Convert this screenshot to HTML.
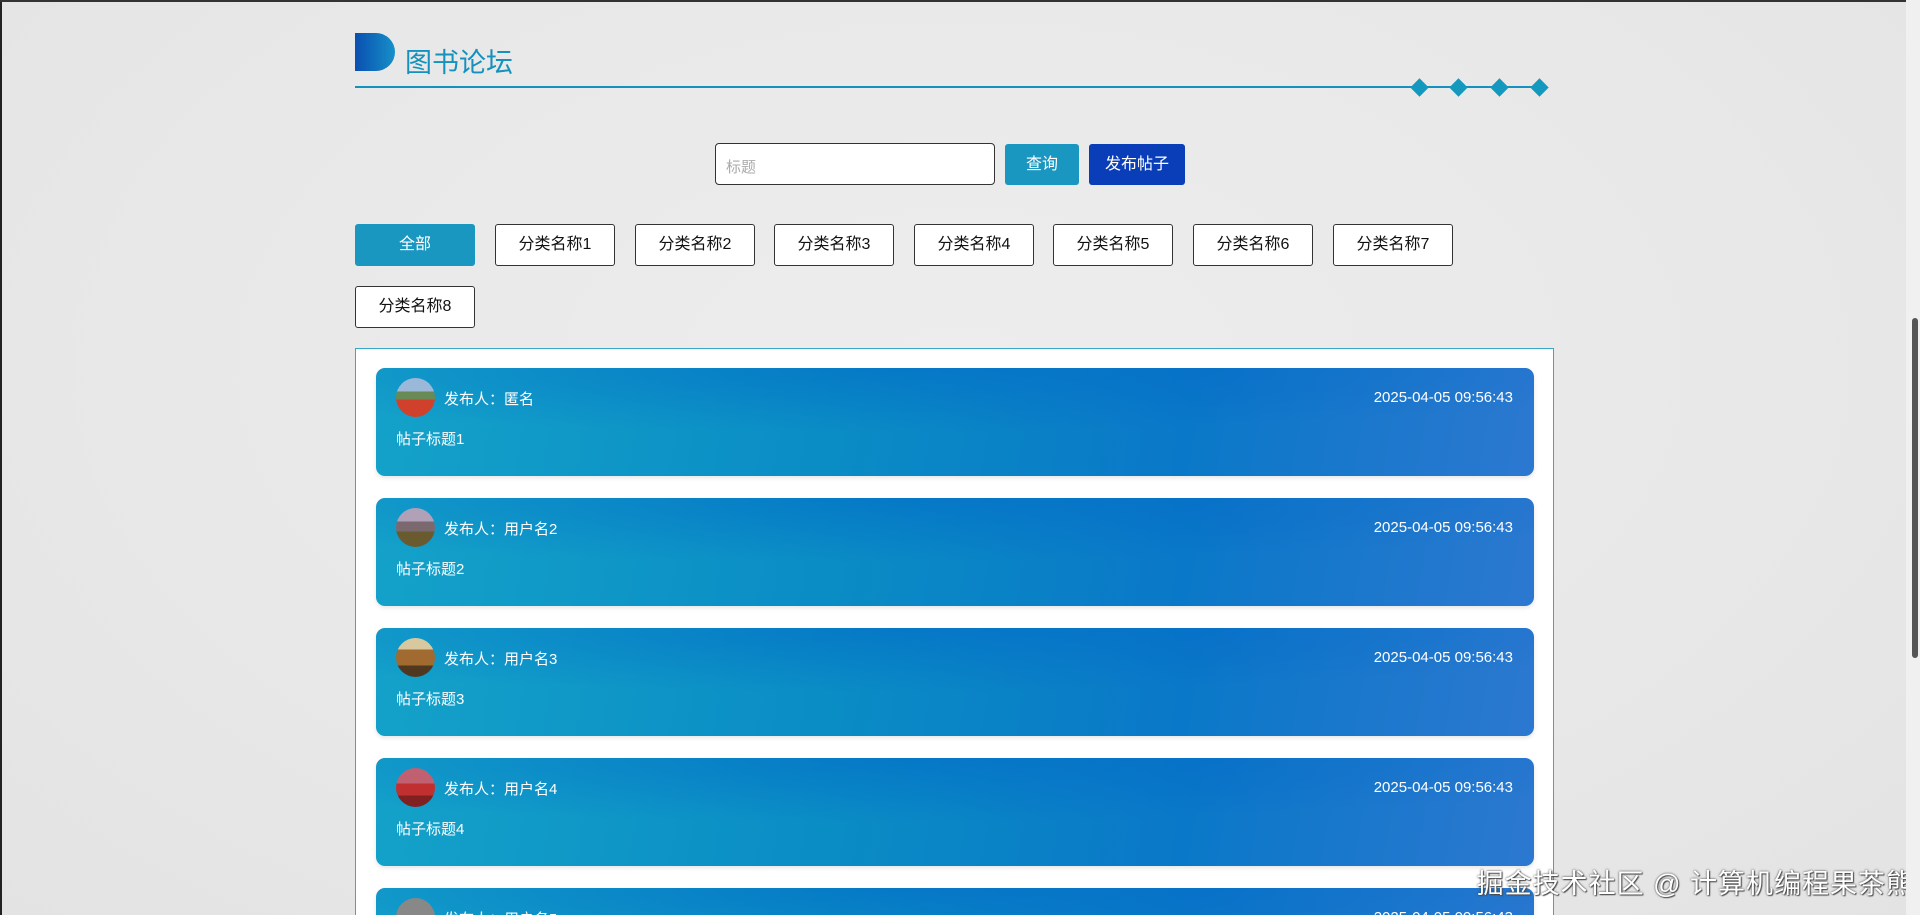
<!DOCTYPE html>
<html><head><meta charset="utf-8"><style>
*{box-sizing:border-box;margin:0;padding:0}
html,body{width:1920px;height:915px;overflow:hidden}
body{font-family:"Liberation Sans","Noto Sans CJK SC",sans-serif;position:relative}
#w{position:absolute;left:0;top:0;width:1920px;height:915px;overflow:hidden;background:radial-gradient(ellipse at 50% 40%,#ededed 0%,#e8e8e8 60%,#e3e3e3 100%)}
.abs{position:absolute}
.logo{left:355px;top:33px;width:40px;height:38px;background:linear-gradient(90deg,#0a4fb0,#1690c8);border-radius:0 20px 20px 0}
.title{left:405px;top:46px;font-size:27px;color:#1591bd;line-height:34px}
.line{left:355px;top:86px;width:1190px;height:2px;background:#1591bd}
.dia{width:13px;height:13px;background:#1598bd;transform:rotate(45deg);top:81px}
.inp{left:715px;top:143px;width:280px;height:42px;background:#fff;border:1.5px solid #333;border-radius:4px;font-size:15px;color:#aaa;padding:12px 10px}
.btn{height:41px;top:144px;color:#fff;font-size:16px;text-align:center;line-height:41px;border-radius:3px}
.cat{width:120px;height:42px;border:1.5px solid #333;background:#fff;border-radius:3px;font-size:16px;text-align:center;line-height:39px;color:#111}
.box{left:355px;top:348px;width:1199px;height:600px;background:#fff;border:1px solid #3aa7c7}
.card{left:376px;width:1158px;height:108px;border-radius:9px;background:radial-gradient(ellipse 70% 60% at 45% 0%,rgba(0,100,200,.45),rgba(0,100,200,0) 100%),linear-gradient(100deg,#14a2c9 0%,#0a8cc5 40%,#0a78c8 70%,#2c78d0 100%);color:#fff;box-shadow:0 2px 4px rgba(0,0,0,.1)}
.av{position:absolute;left:20px;top:10px;width:39px;height:39px;border-radius:50%}
.who{position:absolute;left:68px;top:20px;font-size:15px}
.dt{position:absolute;right:21px;top:21px;font-size:15px}
.tt{position:absolute;left:20px;top:60px;font-size:15px}
.wm{right:6px;top:862px;font-size:27px;color:#fff;text-shadow:0 0 2px #333,1px 1px 1px #555;letter-spacing:1px;white-space:nowrap}
.sb{right:0;top:0;width:14px;height:915px;background:#f0f0f0}
.sb i{position:absolute;right:2px;top:318px;width:6px;height:340px;background:#555;border-radius:3px}
</style></head><body><div id="w">
<div class="abs" style="left:0;top:0;width:2px;height:915px;background:#222"></div>
<div class="abs" style="left:0;top:0;width:1920px;height:2px;background:#333"></div>
<div class="abs logo"></div>
<div class="abs title">图书论坛</div>
<div class="abs line"></div>
<div class="abs dia" style="left:1413px"></div>
<div class="abs dia" style="left:1452px"></div>
<div class="abs dia" style="left:1493px"></div>
<div class="abs dia" style="left:1533px"></div>
<div class="abs inp">标题</div>
<div class="abs btn" style="left:1005px;width:74px;background:#1a97c0">查询</div>
<div class="abs btn" style="left:1089px;width:96px;background:#0a3db8">发布帖子</div>
<div class="abs cat" style="left:355px;top:224px;background:#1a97c0;border-color:#1a97c0;color:#fff">全部</div>
<div class="abs cat" style="left:495px;top:224px">分类名称1</div>
<div class="abs cat" style="left:635px;top:224px">分类名称2</div>
<div class="abs cat" style="left:774px;top:224px">分类名称3</div>
<div class="abs cat" style="left:914px;top:224px">分类名称4</div>
<div class="abs cat" style="left:1053px;top:224px">分类名称5</div>
<div class="abs cat" style="left:1193px;top:224px">分类名称6</div>
<div class="abs cat" style="left:1333px;top:224px">分类名称7</div>
<div class="abs cat" style="left:355px;top:286px">分类名称8</div>
<div class="abs box"></div>
<div class="abs card" style="top:368px"><div class="av" style="background:linear-gradient(#9bb8d8 0 35%,#6a8a55 35% 55%,#d0402a 55%)"></div><div class="who">发布人：匿名</div><div class="dt">2025-04-05 09:56:43</div><div class="tt">帖子标题1</div></div>
<div class="abs card" style="top:498px"><div class="av" style="background:linear-gradient(#b0a0b8 0 35%,#7a6a70 35% 60%,#6a5a30 60%)"></div><div class="who">发布人：用户名2</div><div class="dt">2025-04-05 09:56:43</div><div class="tt">帖子标题2</div></div>
<div class="abs card" style="top:628px"><div class="av" style="background:linear-gradient(#d8c8a0 0 30%,#a06a30 30% 70%,#503820 70%)"></div><div class="who">发布人：用户名3</div><div class="dt">2025-04-05 09:56:43</div><div class="tt">帖子标题3</div></div>
<div class="abs card" style="top:758px"><div class="av" style="background:linear-gradient(#c06070 0 40%,#c03030 40% 70%,#802020 70%)"></div><div class="who">发布人：用户名4</div><div class="dt">2025-04-05 09:56:43</div><div class="tt">帖子标题4</div></div>
<div class="abs card" style="top:888px"><div class="av" style="background:#888"></div><div class="who">发布人：用户名5</div><div class="dt">2025-04-05 09:56:43</div></div>
<div class="abs wm">掘金技术社区 @ 计算机编程果茶熊</div>
<div class="abs sb"><i></i></div>
</div></body></html>
